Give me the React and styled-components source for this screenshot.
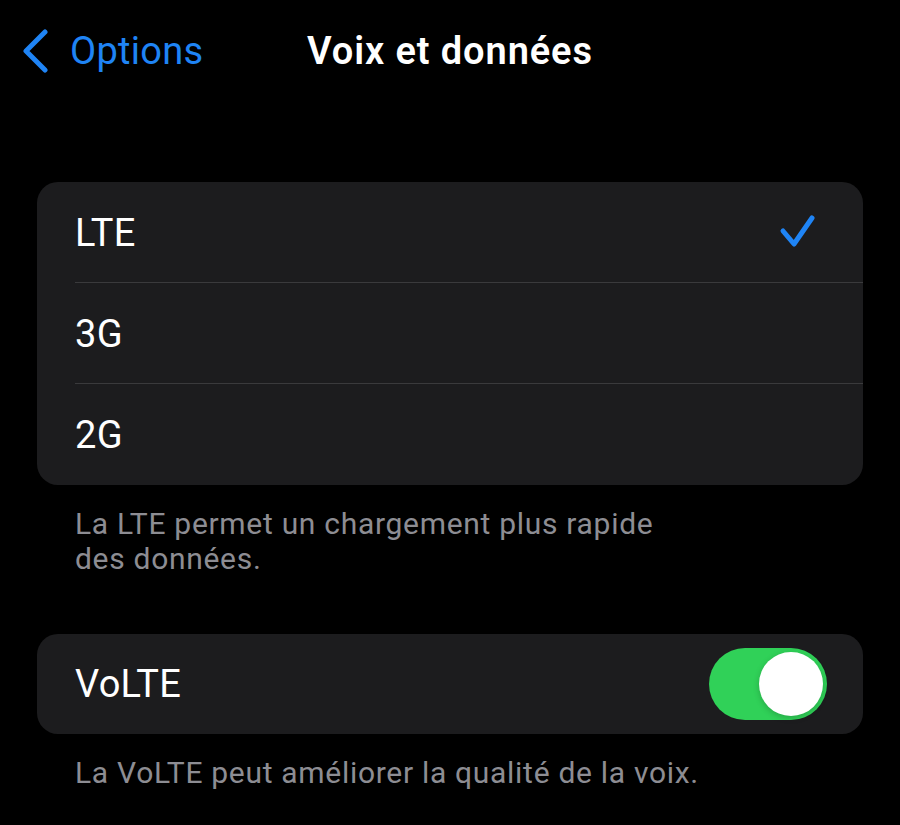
import React, { useState } from "react";
import styled, { createGlobalStyle } from "styled-components";

const GlobalStyle = createGlobalStyle`
  html, body {
    margin: 0;
    padding: 0;
    background: #000;
  }
  body {
    font-family: Roboto, "Liberation Sans", Arial, sans-serif;
    -webkit-font-smoothing: antialiased;
  }
  * { box-sizing: border-box; }
`;

const Page = styled.div`
  width: 900px;
  min-height: 825px;
  background: #000;
  color: #fff;
  display: flex;
  flex-direction: column;
`;

const NavBar = styled.header`
  height: 102px;
  padding: 0 22px;
  display: grid;
  grid-template-columns: 1fr auto 1fr;
  align-items: center;
`;

const BackButton = styled.button`
  justify-self: start;
  display: flex;
  align-items: center;
  gap: 20px;
  padding: 0;
  border: 0;
  background: none;
  color: #1f84f5;
  font-family: inherit;
  font-size: 38px;
  font-weight: 400;
  letter-spacing: 0.3px;
  cursor: pointer;
`;

const Title = styled.h1`
  margin: 0;
  font-size: 38px;
  font-weight: 600;
  color: #fff;
  letter-spacing: 0.9px;
`;

const Content = styled.main`
  padding: 80px 37px 0;
  display: flex;
  flex-direction: column;
`;

const Group = styled.section`
  background: #1c1c1e;
  border-radius: 21px;
  overflow: hidden;
  margin-top: ${(p) => p.$top || 0}px;
`;

const Row = styled.div`
  position: relative;
  height: ${(p) => p.$height || 101}px;
  padding: 0 36px 0 38px;
  display: flex;
  align-items: center;
  justify-content: space-between;
  font-size: 38px;
  letter-spacing: 0.3px;
  color: #fff;
  cursor: pointer;

  &:not(:last-child)::after {
    content: "";
    position: absolute;
    left: 38px;
    right: 0;
    bottom: 0;
    height: 1px;
    background: #3a3a3c;
  }
`;

const Check = styled.svg`
  margin-right: 10px;
  display: block;
`;

const Footer = styled.p`
  margin: 0;
  padding: 21px 38px 0;
  font-size: 30px;
  line-height: 35px;
  letter-spacing: 0.7px;
  color: #8d8d93;
  max-width: ${(p) => p.$maxWidth || "none"};
`;

const Toggle = styled.button`
  width: 118px;
  height: 72px;
  padding: 4px;
  border: 0;
  border-radius: 36px;
  background: ${(p) => (p.$on ? "#30d158" : "#39393d")};
  display: flex;
  justify-content: ${(p) => (p.$on ? "flex-end" : "flex-start")};
  align-items: center;
  cursor: pointer;
`;

const Knob = styled.span`
  width: 64px;
  height: 64px;
  border-radius: 50%;
  background: #fff;
  box-shadow: 0 2px 6px rgba(0, 0, 0, 0.2);
`;

const Chevron = () => (
  <svg width="28" height="44" viewBox="0 0 28 44" fill="none">
    <path
      d="M23 3 L4 22 L23 41"
      stroke="#1f84f5"
      strokeWidth="5"
      strokeLinecap="round"
      strokeLinejoin="round"
    />
  </svg>
);

const CheckMark = () => (
  <Check width="38" height="38" viewBox="0 0 38 38" fill="none">
    <path
      d="M4 17 L15 30 L33 4"
      stroke="#1f84f5"
      strokeWidth="5"
      strokeLinecap="round"
      strokeLinejoin="round"
    />
  </Check>
);

const networks = ["LTE", "3G", "2G"];

export default function App() {
  const [selected, setSelected] = useState("LTE");
  const [volte, setVolte] = useState(true);

  return (
    <>
      <GlobalStyle />
      <Page>
        <NavBar>
          <BackButton>
            <Chevron />
            Options
          </BackButton>
          <Title>Voix et données</Title>
          <span />
        </NavBar>
        <Content>
          <Group>
            {networks.map((n) => (
              <Row key={n} onClick={() => setSelected(n)}>
                <span>{n}</span>
                {selected === n && <CheckMark />}
              </Row>
            ))}
          </Group>
          <Footer $maxWidth="680px">
            La LTE permet un chargement plus rapide des données.
          </Footer>
          <Group $top={58}>
            <Row $height={100}>
              <span>VoLTE</span>
              <Toggle $on={volte} onClick={() => setVolte(!volte)}>
                <Knob />
              </Toggle>
            </Row>
          </Group>
          <Footer>La VoLTE peut améliorer la qualité de la voix.</Footer>
        </Content>
      </Page>
    </>
  );
}
